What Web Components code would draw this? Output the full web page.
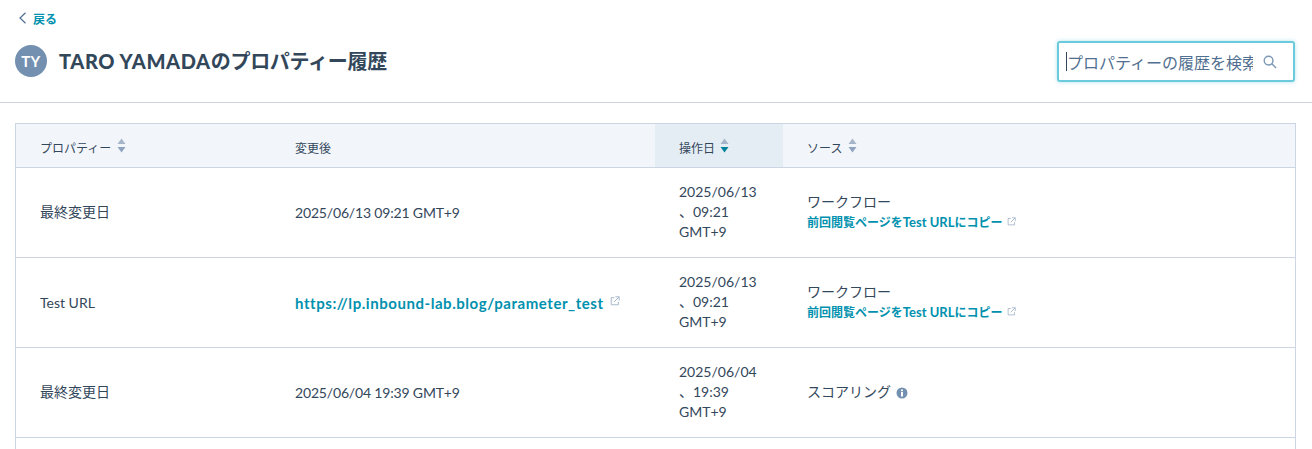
<!DOCTYPE html>
<html lang="ja">
<head>
<meta charset="utf-8">
<title>プロパティー履歴</title>
<style>
  html, body { margin: 0; height: 449px; overflow: hidden; background: #fff; }
  body { font-family: Lato, "Noto Sans CJK JP", sans-serif; color: #33475b; font-size: 14px; }
</style>
</head>
<body>
<history-header name="TARO YAMADA" initials="TY"></history-header>
<history-table>
  <history-row slot="rows" ja property="最終変更日" date="2025/06/13 、09:21 GMT+9">
    <span slot="value" class="when" style="letter-spacing:-.17px">2025/06/13 09:21 GMT+9</span>
    <source-cell slot="source" label="ワークフロー" link="前回閲覧ページをTest URLにコピー"></source-cell>
  </history-row>
  <history-row slot="rows" property="Test URL" date="2025/06/13 、09:21 GMT+9">
    <ext-link slot="value">https://lp.inbound-lab.blog/parameter_test</ext-link>
    <source-cell slot="source" label="ワークフロー" link="前回閲覧ページをTest URLにコピー"></source-cell>
  </history-row>
  <history-row slot="rows" ja property="最終変更日" date="2025/06/04 、19:39 GMT+9">
    <span slot="value" class="when" style="letter-spacing:-.17px">2025/06/04 19:39 GMT+9</span>
    <source-cell slot="source" label="スコアリング" info></source-cell>
  </history-row>
  <history-row slot="rows"></history-row>
</history-table>

<script>
const EXT_ICON = `<svg viewBox="0 0 12 12" fill="none" stroke="#99acc2" stroke-width="1">
  <path d="M5 2H1.500v8.500H10V7"/><path d="M6.500 1H11V5.500M11 1 5 7"/></svg>`;

class HistoryHeader extends HTMLElement {
  constructor() {
    super();
    this.attachShadow({mode: 'open'});
  }
  connectedCallback() {
    this.shadowRoot.innerHTML = `
    <style>
      :host { display: flex; height: 102px; border-bottom: 1px solid #cbd6e2;
        padding: 0 17px 0 15px; justify-content: space-between; align-items: flex-start; }
      .left { display: flex; flex-direction: column; }
      .back { display: flex; align-items: center; gap: 6px; margin: 10px 0 0 3px; height: 16px;
        color: #0091ae; font-size: 12px; font-weight: 700; }
      .back svg { width: 9px; height: 12px; }
      .title { display: flex; align-items: center; gap: 12px; margin-top: 19px; height: 32px; }
      .avatar { width: 32px; height: 32px; border-radius: 50%; background: #7390b0; color: #fff;
        font-size: 15px; font-weight: 700; letter-spacing: .5px; display: flex; align-items: center; justify-content: center; }
      h1 { margin: 0; padding-bottom: 2px; font-size: 20px; font-weight: 700; color: #33475b; white-space: nowrap; letter-spacing: -.3px; }
      h1 b { letter-spacing: .6px; }
      .search { margin-top: 41px; width: 238px; height: 41px; box-sizing: border-box; border: 2px solid #6bcbdc;
        border-radius: 3px; box-shadow: 0 0 4px rgba(0,164,189,.3); display: flex; align-items: center;
        padding: 0 16px 0 7px; background: #fff; }
      .caret { width: 1px; height: 19px; background: #33475b; flex: none; }
      .ph { color: #516f90; font-size: 16px; flex: 1; min-width: 0; white-space: nowrap; overflow: hidden; }
      .search svg { width: 14px; height: 14px; flex: none; margin-left: 10px; }
    </style>
    <div class="left">
      <div class="back">
        <svg viewBox="0 0 9 12" fill="none" stroke="#516f90" stroke-width="1.200"><path d="M7.500 .8 2 6l5.500 5.200"/></svg>
        <span>戻る</span>
      </div>
      <div class="title">
        <div class="avatar">${this.getAttribute('initials')}</div>
        <h1><b>${this.getAttribute('name')}</b>のプロパティー履歴</h1>
      </div>
    </div>
    <div class="search">
      <span class="caret"></span>
      <span class="ph">プロパティーの履歴を検索</span>
      <svg viewBox="0 0 15 15" fill="none" stroke="#7c98b6" stroke-width="1.500"><circle cx="6" cy="6" r="4.700"/><path d="m9.500 9.500 4.500 4.500"/></svg>
    </div>`;
  }
}

class SortArrows extends HTMLElement {
  constructor() {
    super();
    this.attachShadow({mode: 'open'});
    const down = this.hasAttribute('active') ? '#00829b' : '#8ea3bf';
    this.shadowRoot.innerHTML = `
    <style>
      :host { display: inline-block; width: 9px; height: 15px; }
      svg { display: block; width: 9px; height: 15px; }
    </style>
    <svg viewBox="0 0 9 15"><path d="M4.500 .5 8.500 6H.5z" fill="#a5b4c9"/><path d="M.5 9h8l-4 5.500z" fill="${down}"/></svg>`;
  }
}

class HistoryTable extends HTMLElement {
  constructor() {
    super();
    this.attachShadow({mode: 'open'});
    this.shadowRoot.innerHTML = `
    <style>
      :host { display: block; margin: 20px 16px 0 15px; border: 1px solid #cbd6e2; border-bottom: 0; }
      .head { display: grid; grid-template-columns: 255px 384px 128px 1fr; height: 43px;
        background: #f2f6fa; border-bottom: 1px solid #cbd6e2; font-size: 12px; color: #33475b; }
      .head div { display: flex; align-items: center; gap: 6px; padding-left: 24px; }
      .head .active { gap: 5px; background: #e5edf4; }
      .head span { padding-top: 4px; }
    </style>
    <div class="head">
      <div><span>プロパティー</span><sort-arrows></sort-arrows></div>
      <div><span>変更後</span></div>
      <div class="active"><span>操作日</span><sort-arrows active></sort-arrows></div>
      <div><span>ソース</span><sort-arrows></sort-arrows></div>
    </div>
    <slot name="rows"></slot>`;
  }
}

class HistoryRow extends HTMLElement {
  constructor() {
    super();
    this.attachShadow({mode: 'open'});
  }
  connectedCallback() {
    const date = (this.getAttribute('date') || '').split(' ').join('<br>');
    this.shadowRoot.innerHTML = `
    <style>
      :host { display: grid; grid-template-columns: 255px 384px 128px 1fr; height: 89px;
        border-bottom: 1px solid #cbd6e2; font-size: 14px; color: #33475b; }
      .cell { display: flex; align-items: center; padding-left: 24px; }
      .date { line-height: 20px; padding-bottom: 2px; }
      :host([ja]) .prop { padding-bottom: 3px; }
    </style>
    <div class="cell prop">${this.getAttribute('property') || ''}</div>
    <div class="cell"><slot name="value"></slot></div>
    <div class="cell date"><span>${date}</span></div>
    <div class="cell"><slot name="source"></slot></div>`;
  }
}

class ExtLink extends HTMLElement {
  constructor() {
    super();
    this.attachShadow({mode: 'open'});
    this.shadowRoot.innerHTML = `
    <style>
      :host { display: inline-flex; align-items: center; gap: 6px; color: #0091ae; font-weight: 700; font-size: 15px; letter-spacing: .55px; }
      svg { width: 10px; height: 10px; margin-top: -4px; }
    </style>
    <slot></slot>${EXT_ICON}`;
  }
}

class SourceCell extends HTMLElement {
  constructor() {
    super();
    this.attachShadow({mode: 'open'});
  }
  connectedCallback() {
    // the latin part of the link runs wider than the kana around it
    const link = (this.getAttribute('link') || '').replace(/[A-Za-z ]+/, m => `<i>${m}</i>`);
    const info = this.hasAttribute('info');
    this.shadowRoot.innerHTML = `
    <style>
      :host { display: block; }
      .label { display: flex; align-items: center; gap: 5px; font-size: 14px; line-height: 20px; }
      :host([info]) .label { margin-top: -2px; }
      .link { display: flex; align-items: center; gap: 5px; color: #0091ae; font-weight: 700; font-size: 12px; line-height: 20px; }
      .link i { font-style: normal; font-size: 13px; }
      .link svg { width: 9px; height: 9px; margin-top: -3px; }
      .info { width: 12px; height: 12px; margin-top: 2px; }
    </style>
    <div class="label">${this.getAttribute('label')}${info ? `
      <svg class="info" viewBox="0 0 12 12"><circle cx="6" cy="6" r="5.500" fill="#7390b0"/><rect x="5" y="5" width="2" height="4.500" fill="#fff"/><rect x="5" y="2.500" width="2" height="1.700" fill="#fff"/></svg>` : ''}</div>
    ${link ? `<div class="link"><span>${link}</span>${EXT_ICON}</div>` : ''}`;
  }
}

customElements.define('history-header', HistoryHeader);
customElements.define('sort-arrows', SortArrows);
customElements.define('history-table', HistoryTable);
customElements.define('history-row', HistoryRow);
customElements.define('ext-link', ExtLink);
customElements.define('source-cell', SourceCell);
</script>
</body>
</html>
